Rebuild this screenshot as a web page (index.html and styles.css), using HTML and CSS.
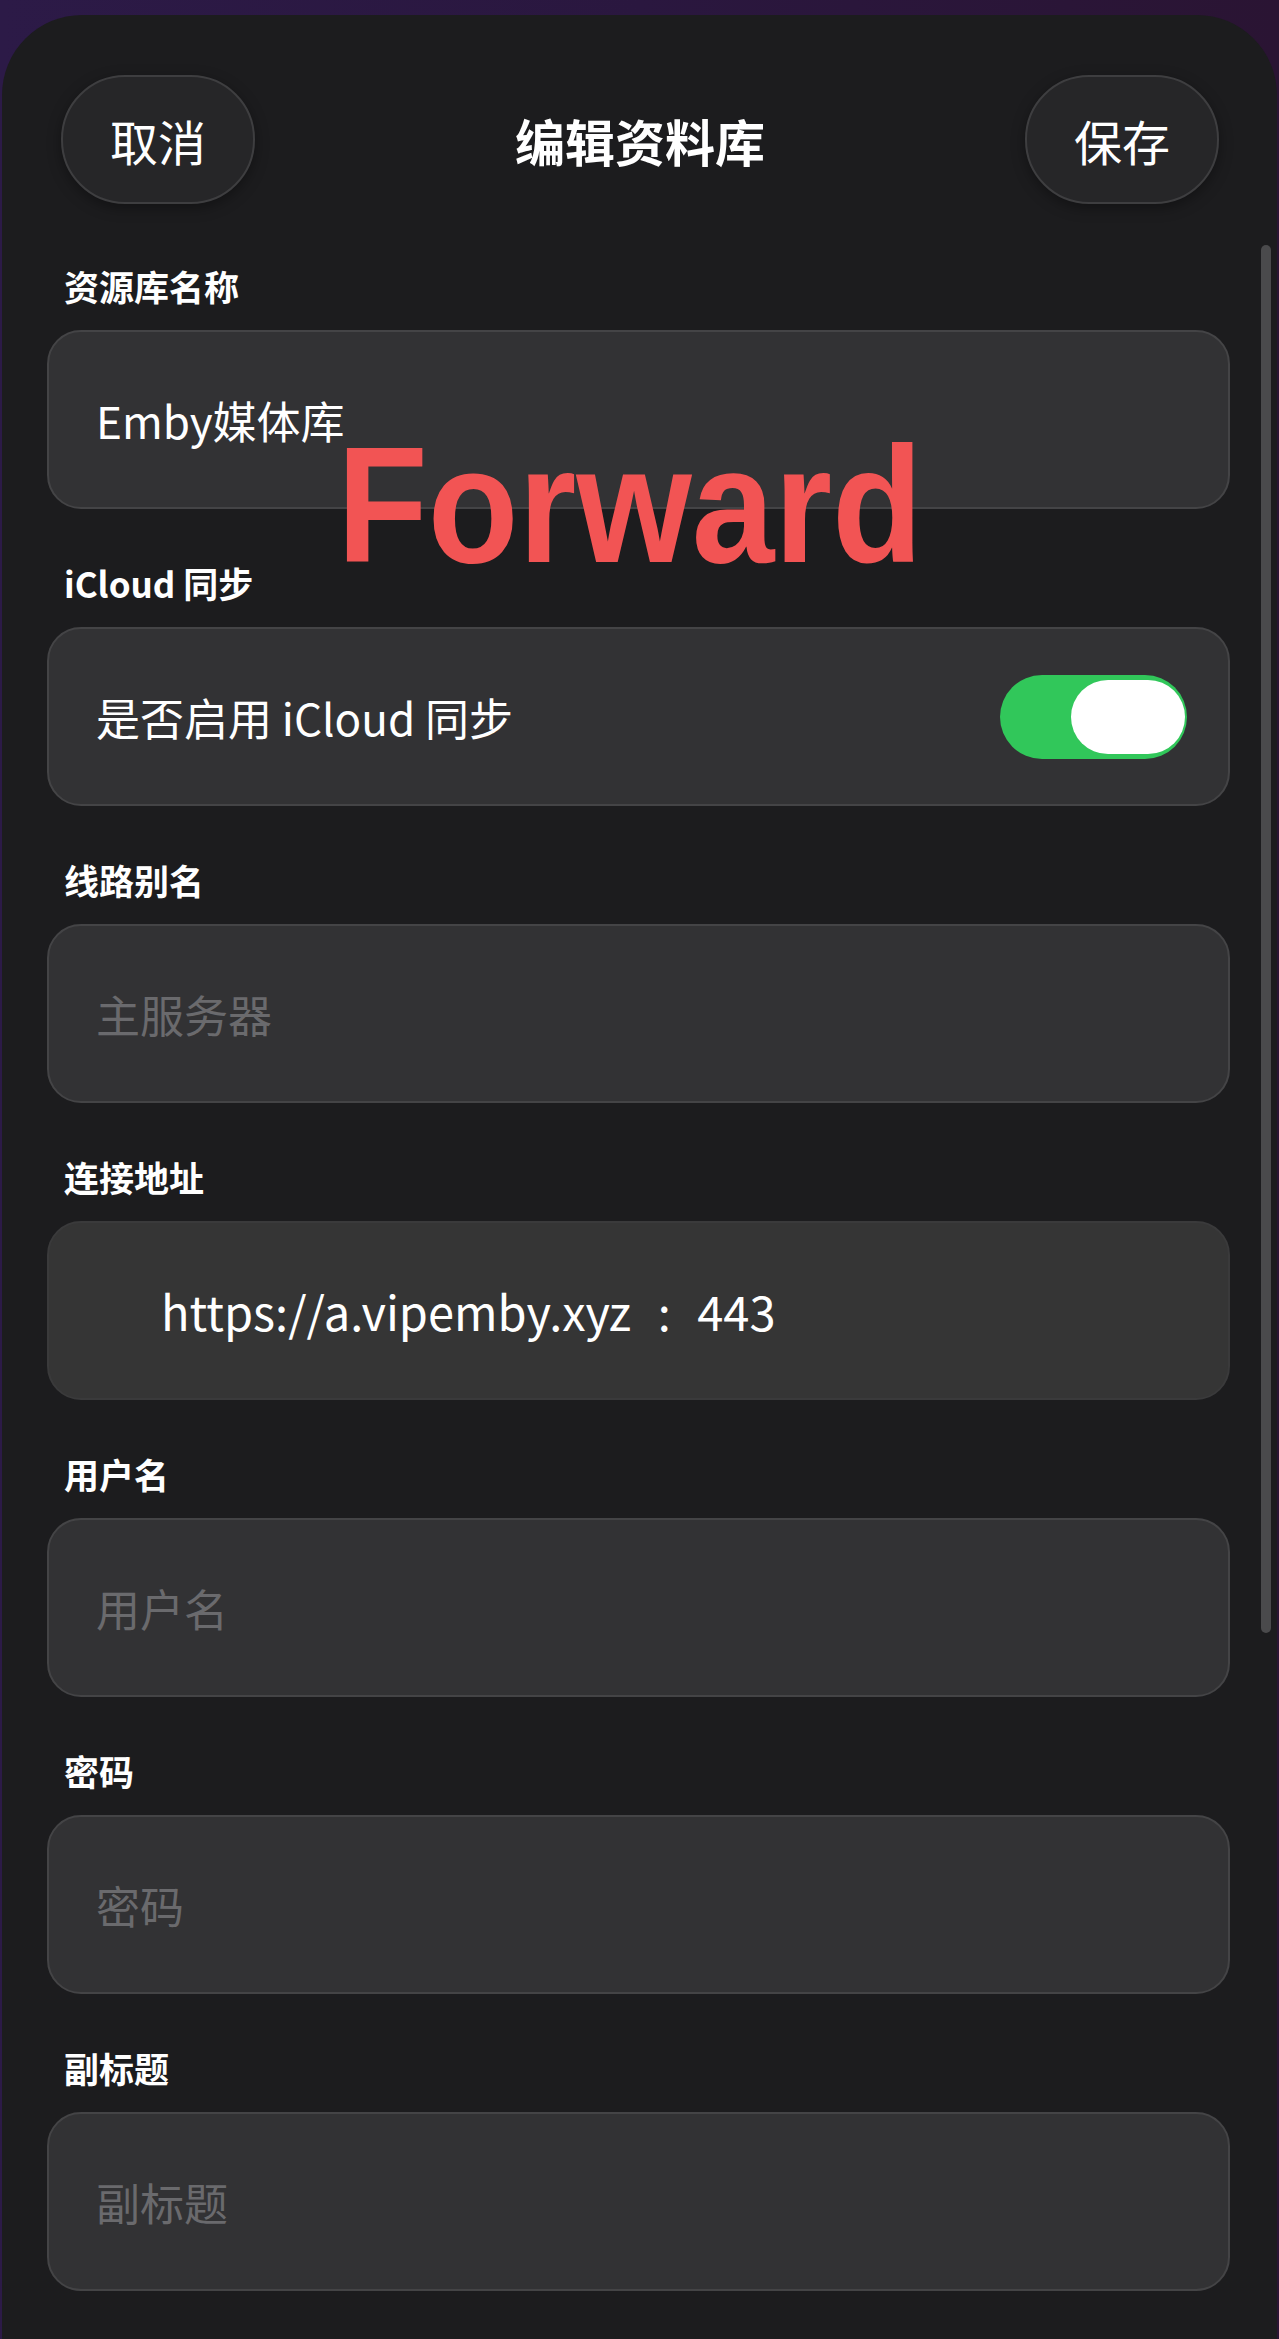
FILE: index.html
```html
<!DOCTYPE html>
<html lang="zh-CN">
<head>
<meta charset="utf-8">
<title>编辑资料库</title>
<link rel="stylesheet" href="styles.css">
</head>
<body>
<div class="sheet">
  <header class="topbar">
    <button class="pill" type="button">取消</button>
    <h1 class="title">编辑资料库</h1>
    <button class="pill" type="button">保存</button>
  </header>

  <div class="form">
    <div class="field">
      <div class="label">资源库名称</div>
      <div class="box"><span class="value">Emby媒体库</span></div>
    </div>

    <div class="field">
      <div class="label">iCloud 同步</div>
      <div class="box box-row">
        <span class="value">是否启用 iCloud 同步</span>
        <span class="toggle"><span class="knob"></span></span>
      </div>
    </div>

    <div class="field">
      <div class="label">线路别名</div>
      <div class="box"><span class="placeholder">主服务器</span></div>
    </div>

    <div class="field">
      <div class="label">连接地址</div>
      <div class="box box-url"><span class="value url">https://a.vipemby.xyz : 443</span></div>
    </div>

    <div class="field">
      <div class="label">用户名</div>
      <div class="box"><span class="placeholder">用户名</span></div>
    </div>

    <div class="field">
      <div class="label">密码</div>
      <div class="box"><span class="placeholder">密码</span></div>
    </div>

    <div class="field">
      <div class="label">副标题</div>
      <div class="box"><span class="placeholder">副标题</span></div>
    </div>
  </div>

  <div class="watermark">Forward</div>
  <div class="scrollbar"></div>
</div>
</body>
</html>
```

FILE: styles.css
```css
* {
  box-sizing: border-box;
}

html, body {
  margin: 0;
  padding: 0;
}

body {
  width: 1279px;
  height: 2339px;
  overflow: hidden;
  background: linear-gradient(90deg, #2c1a47 0%, #2a173f 50%, #2a1433 100%);
  font-family: "Noto Sans CJK SC", "Noto Sans", sans-serif;
  color: #ffffff;
}

.sheet {
  position: relative;
  margin: 15px 2px 0 2px;
  height: 2324px;
  background: #1c1c1e;
  border-radius: 80px 80px 0 0;
}

.topbar {
  display: flex;
  align-items: center;
  justify-content: space-between;
  padding: 60px 58px 0 59px;
}

.pill {
  width: 194px;
  height: 129px;
  border-radius: 64px;
  border: 2px solid #3e3e40;
  background: #262628;
  color: #ffffff;
  font-family: "Noto Sans CJK SC", sans-serif;
  font-size: 48px;
  font-weight: 400;
  padding: 0;
  box-shadow: 0 4px 14px rgba(0, 0, 0, 0.35);
}

.title {
  margin: 0;
  font-size: 50px;
  font-weight: 700;
  line-height: 60px;
}

.form {
  margin-top: 62px;
  padding: 0 47px 0 45px;
}

.field {
  margin-bottom: 54px;
}

.label {
  font-size: 35px;
  line-height: 40px;
  font-weight: 700;
  padding-left: 17px;
  margin-bottom: 24px;
}

.box {
  height: 179px;
  border-radius: 34px;
  border: 2px solid #444446;
  background: #323234;
  display: flex;
  align-items: center;
  padding: 0 41px 0 47px;
}

.box-row {
  justify-content: space-between;
}

.box-url {
  background: #353535;
  border-color: #3a3a3b;
  padding-left: 112px;
}

.value {
  font-size: 44px;
  line-height: 50px;
  color: #ffffff;
}

.url {
  font-size: 47px;
  word-spacing: 16px;
  white-space: pre;
}

.placeholder {
  font-size: 44px;
  line-height: 50px;
  color: #6a6a6d;
}

.toggle {
  width: 187px;
  height: 84px;
  border-radius: 42px;
  background: #31c75a;
  display: flex;
  justify-content: flex-end;
  align-items: center;
  padding: 0 2px;
}

.knob {
  width: 114px;
  height: 74px;
  border-radius: 37px;
  background: #ffffff;
}

.watermark {
  position: absolute;
  left: 335px;
  top: 408px;
  font-family: "Liberation Sans", Arial, sans-serif;
  font-weight: 700;
  font-size: 165px;
  line-height: 1;
  color: #f25454;
  transform: scaleX(0.9);
  transform-origin: left top;
  white-space: nowrap;
}

.scrollbar {
  position: absolute;
  left: 1259px;
  top: 230px;
  width: 10px;
  height: 1388px;
  border-radius: 5px;
  background: #4a4a4c;
}
```
